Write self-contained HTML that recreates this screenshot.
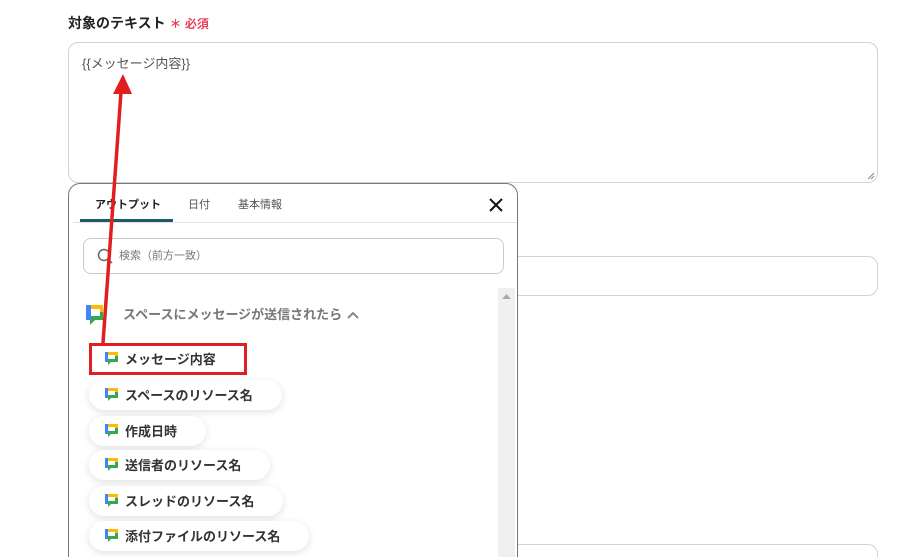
<!DOCTYPE html>
<html><head><meta charset="utf-8"><style>
*{box-sizing:border-box;margin:0;padding:0}
html,body{width:914px;height:557px;overflow:hidden}
body{background:#fff;font-family:"Liberation Sans","Noto Sans CJK JP",sans-serif;position:relative;color:#333}
.abs{position:absolute}
.lbl{left:68px;top:13px;font-size:14px;font-weight:bold;color:#222}
.lbl .req{color:#e8405a;font-size:12px;font-weight:bold}
.ta{left:68px;top:42px;width:810px;height:141px;border:1px solid #cfd3d8;border-radius:10px}
.ta span{position:absolute;left:13px;top:10px;font-size:13px;color:#555}
.in{left:68px;width:810px;height:40px;border:1px solid #cfd3d8;border-radius:10px}
.panel{left:68px;top:183px;width:450px;height:374px;border:1px solid #777;border-bottom:none;border-radius:12px 12px 0 0;background:#fff;overflow:hidden}
.tab{top:12px;font-size:11px;color:#555}
.chip{left:20px;height:30px;border-radius:15px;background:#fff;box-shadow:0 2px 8px rgba(0,0,0,.12);font-size:13px;font-weight:bold;color:#333;padding:0 29px 2px 16px;display:flex;align-items:center;gap:7px}
.ic{width:13px;height:13px;display:inline-block}
</style></head><body>
<div class="abs lbl">対象のテキスト <span class="req">＊ 必須</span></div>
<div class="abs ta"><span>{{メッセージ内容}}</span>
<svg class="abs" style="right:2px;bottom:2px" width="8" height="8"><path d="M1 7L7 1M4 7L7 4" stroke="#888"/></svg></div>
<div class="abs in" style="top:256px"></div>
<div class="abs in" style="top:544px;height:13px;border-bottom:none;border-radius:10px 10px 0 0"></div>
<div class="abs panel">
 <div class="abs tab" style="left:26px;color:#222;font-weight:bold">アウトプット</div>
 <div class="abs tab" style="left:119px">日付</div>
 <div class="abs tab" style="left:169px">基本情報</div>
 <div class="abs" style="left:11px;top:35px;width:93px;height:3px;background:#1e5a6e"></div>
 <div class="abs" style="left:4px;top:38px;width:444px;height:1px;background:#e3e3e3"></div>
 <svg class="abs" style="left:419px;top:13px" width="16" height="16"><path d="M2 2L14 14M14 2L2 14" stroke="#111" stroke-width="2"/></svg>
 <div class="abs" style="left:14px;top:54px;width:421px;height:36px;border:1px solid #c8ccd0;border-radius:8px">
  <svg class="abs" style="left:13px;top:9px" width="16" height="16"><circle cx="7" cy="7" r="5.5" fill="none" stroke="#666" stroke-width="1.5"/><path d="M11 11L15 15" stroke="#666" stroke-width="1.5"/></svg>
  <span class="abs" style="left:35px;top:8px;font-size:11px;color:#777">検索（前方一致）</span>
 </div>
 <div class="abs" style="left:429px;top:104px;width:17px;height:270px;background:#f0f0f0"></div>
 <svg class="abs" style="left:433px;top:110px" width="9" height="6"><path d="M0 5L4.5 0L9 5Z" fill="#aaa"/></svg>
 <svg class="abs" style="left:16px;top:120px" width="20" height="22"><rect x="1" y="1" width="17" height="15" fill="#34a853"/><rect x="1" y="1" width="17" height="7" fill="#fbbc04"/><rect x="1" y="1" width="5" height="15" fill="#4285f4"/><rect x="6" y="5" width="9" height="7" fill="#fff"/><path d="M5 16v5l5-5z" fill="#34a853"/></svg>
 <div class="abs" style="left:54px;top:120px;font-size:13px;font-weight:bold;color:#777">スペースにメッセージが送信されたら</div>
 <svg class="abs" style="left:278px;top:127px" width="12" height="8"><path d="M1 7L6 2L11 7" fill="none" stroke="#888" stroke-width="2"/></svg>
 <div class="abs" style="left:20px;top:159px;width:158px;height:32px;border:3px solid #e02020;background:#fff;display:flex;align-items:center;padding-left:13px;padding-bottom:2px;gap:7px;font-size:13px;font-weight:bold"><svg class="ic" viewBox="0 0 13 13"><rect x="0" y="0" width="13" height="10" fill="#34a853"/><rect x="0" y="0" width="13" height="4" fill="#fbbc04"/><rect x="0" y="0" width="3" height="10" fill="#4285f4"/><rect x="3" y="3" width="7" height="4" fill="#fff"/><path d="M3 10v3l3-3z" fill="#34a853"/></svg>メッセージ内容</div>
 <div class="abs chip" style="top:196px">ICON スペースのリソース名</div>
 <div class="abs chip" style="top:232px">ICON 作成日時</div>
 <div class="abs chip" style="top:266px">ICON 送信者のリソース名</div>
 <div class="abs chip" style="top:302px">ICON スレッドのリソース名</div>
 <div class="abs chip" style="top:337px">ICON 添付ファイルのリソース名</div>
</div>
<svg class="abs" style="left:0;top:0" width="914" height="557"><path d="M103 343L121 92" stroke="#e02020" stroke-width="3.5"/><path d="M113 94L123 74L132 94Z" fill="#e02020"/></svg>
<script>
const s='<svg class="ic" viewBox="0 0 13 13"><rect x="0" y="0" width="13" height="10" fill="#34a853"/><rect x="0" y="0" width="13" height="4" fill="#fbbc04"/><rect x="0" y="0" width="3" height="10" fill="#4285f4"/><rect x="3" y="3" width="7" height="4" fill="#fff"/><path d="M3 10v3l3-3z" fill="#34a853"/></svg>';
document.querySelectorAll('.chip').forEach(c=>{c.innerHTML=c.innerHTML.replace('ICON ',s)});
</script>
</body></html>
